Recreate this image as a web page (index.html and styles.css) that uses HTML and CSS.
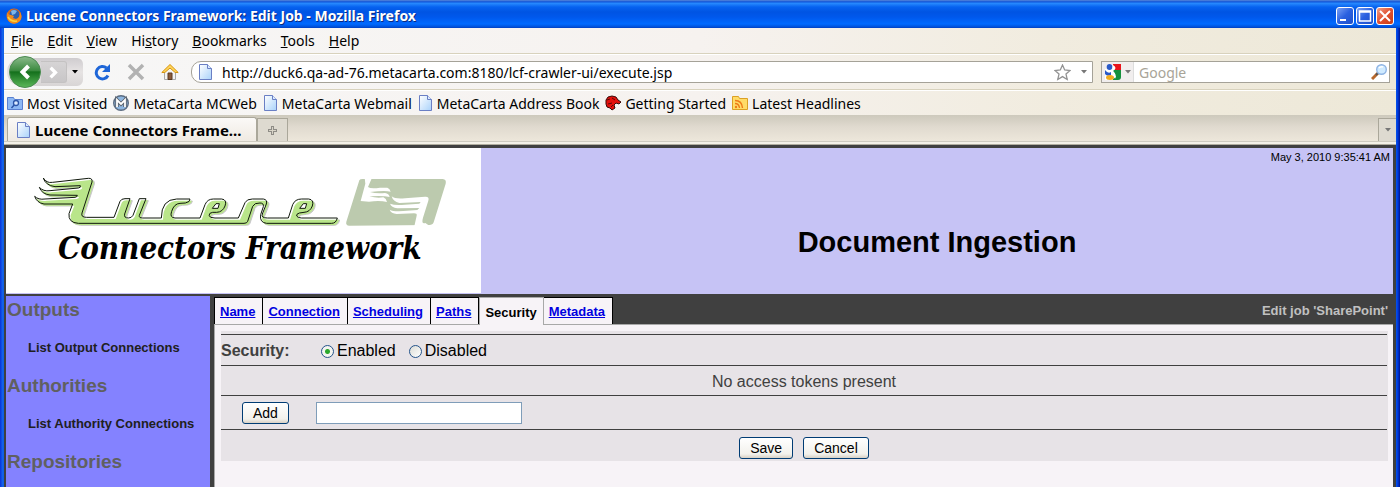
FILE: index.html
```html
<!DOCTYPE html>
<html lang="en">
<head>
<meta charset="utf-8">
<title>Lucene Connectors Framework: Edit Job</title>
<link rel="stylesheet" href="styles.css">
</head>
<body>
<svg class="defs" width="0" height="0" aria-hidden="true">
  <defs>
    <linearGradient id="sheet" x1="0" y1="0" x2="1" y2="1"><stop offset="0" stop-color="#fff"/><stop offset="1" stop-color="#a9d2fa"/></linearGradient>
    <linearGradient id="green" x1="0" y1="0" x2="0" y2="1"><stop offset="0" stop-color="#8cbb8c"/><stop offset=".45" stop-color="#3c8b40"/><stop offset=".5" stop-color="#14701c"/><stop offset="1" stop-color="#5cb85a"/></linearGradient>
    <symbol id="page" viewBox="0 0 13 16"><path d="M.5.5h8l4 4v11H.5z" fill="url(#sheet)" stroke="#6a7fc4"/><path d="M8.500.5v4h4" fill="#dcebff" stroke="#6a7fc4"/></symbol>
    <symbol id="caret" viewBox="0 0 6 4"><path d="M0 0h6L3 3.500z" fill="currentColor"/></symbol>
    <path id="word" d="M70 40Q78 56 98 53L205 41Q218 40 216 52L186 145Q182 158 200 158L282 158 300 110Q304 102 315 102L330 102 314 148Q311 160 325 160 335 160 339 152L358 102 378 102 358 152Q356 160 368 160L424 160Q424 104 470 103L510 103Q511 112 496 115L480 116Q462 117 455 140 448 159 465 160L540 160 555 120Q562 103 580 103L605 103Q622 105 615 124 608 142 590 143L578 143Q567 144 567 153 570 160 585 160L655 160 675 114Q680 103 697 103L730 103Q743 105 739 118L727 148Q723 160 742 160L805 160 818 120Q825 103 845 103L866 103Q883 105 877 124 870 142 852 143L838 145Q828 148 830 154 833 160 845 160L952 160Q948 176 935 176L740 176Q718 174 722 150L730 126Q732 115 720 115 703 114 698 125L683 170Q681 176 672 176L175 176Q144 174 147 147L158 118 72 118Q50 114 44 95 55 106 75 103L165 98Q172 97 172 92L90 91Q65 88 58 68 70 81 90 78L175 70Q183 69 181 63L105 66Q76 62 70 40z"/>
  </defs>
</svg>
<div class="window">
  <header class="titlebar">
    <svg class="icon16" viewBox="0 0 16 16"><circle cx="8" cy="8" r="7.500" fill="#e66a10"/><circle cx="8.500" cy="6.500" r="5" fill="#2a5fae"/><path d="M5 3q3-2 6 0l-2 3-3 1z" fill="#7db6e8"/><path d="M1 4q1 3 4 3l3 1-1 2 3 1q4-1 4-7 3 5 0 9-4 4-9 2Q0 12 1 4z" fill="#f08a1c"/><path d="M2 9q3 5 9 4" fill="none" stroke="#ffd23a" stroke-width="1.500"/></svg>
    <span class="titletext">Lucene Connectors Framework: Edit Job - Mozilla Firefox</span>
    <button class="winbtn" aria-label="Minimize"><svg viewBox="0 0 16 16"><path d="M3 11h6v2H3z" fill="#fff"/></svg></button>
    <button class="winbtn" aria-label="Maximize"><svg viewBox="0 0 16 16"><path d="M2.500 3h11v10h-11zM2 4h12" fill="none" stroke="#fff" stroke-width="1.500"/></svg></button>
    <button class="winbtn close" aria-label="Close"><svg viewBox="0 0 16 16"><path d="M3 3l10 10M13 3L3 13" stroke="#fff" stroke-width="2"/></svg></button>
  </header>

  <nav class="menubar" aria-label="Menu">
    <button><u>F</u>ile</button><button><u>E</u>dit</button><button><u>V</u>iew</button><button>Hi<u>s</u>tory</button><button><u>B</u>ookmarks</button><button><u>T</u>ools</button><button><u>H</u>elp</button>
  </nav>

  <div class="navbar">
    <div class="backforward">
      <button class="back" aria-label="Back"><svg viewBox="0 0 32 32"><circle cx="16" cy="16" r="15.500" fill="url(#green)" stroke="#4a8a50"/><path d="M19.500 10L13.500 16l6 6" fill="none" stroke="#fff" stroke-width="4"/></svg></button>
      <button class="forward" aria-label="Forward"><svg viewBox="0 0 26 22"><path d="M10 6l5 5-5 5" fill="none" stroke="#fff" stroke-width="3.500"/></svg></button>
      <button class="recent" aria-label="Recent pages"><svg class="caret"><use href="#caret"/></svg></button>
    </div>
    <button class="tool" aria-label="Reload"><svg viewBox="0 0 18 18"><path d="M13.500 5A6.200 6.200 0 1 0 15 12.500" fill="none" stroke="#1e66d8" stroke-width="3"/><path d="M17 1v8H9z" fill="#1e66d8"/></svg></button>
    <button class="tool" aria-label="Stop"><svg viewBox="0 0 18 18"><path d="M2 2l14 14M16 2L2 16" stroke="#b2b2b2" stroke-width="3.500"/></svg></button>
    <button class="tool" aria-label="Home"><svg viewBox="0 0 18 18"><path d="M3.500 8v8.500h11V8L9 3z" fill="#f3f3f3" stroke="#a8a8a8"/><path d="M7 10h4v6.500H7z" fill="#8a5a3a" stroke="#5a3a22"/><path d="M9 1.500L.8 9.500h3L9 5l5.200 4.500h3z" fill="#ffd65c" stroke="#d6930f"/></svg></button>
    <div class="urlbox">
      <svg class="pageicon"><use href="#page"/></svg>
      <input class="url" type="text" aria-label="Address" value="http://duck6.qa-ad-76.metacarta.com:8180/lcf-crawler-ui/execute.jsp">
      <svg class="star" viewBox="0 0 17 17"><path d="M8.500 1l2.200 5 5.300.5-4 3.600 1.200 5.400-4.700-2.900-4.700 2.900L5 10.100 1 6.500 6.300 6z" fill="#fff" stroke="#929292" stroke-width="1.300"/></svg>
      <svg class="caret dim"><use href="#caret"/></svg>
    </div>
    <div class="searchbox">
      <div class="engine">
        <svg class="icon16" viewBox="0 0 16 16"><path d="M8 0h8v6H8z" fill="#e8141c"/><path d="M8 6h8v7q0 3-3 3H8z" fill="#14903c"/><path d="M0 5h7l4 8-5 3H0z" fill="#fff"/><ellipse cx="4.500" cy="3" rx="2.800" ry="3" fill="#2a5ac8"/><path d="M0 6q3 4 6 2v3q-4 2-6-1z" fill="#2a5ac8"/><ellipse cx="5" cy="13.500" rx="4" ry="2.500" fill="#f2ac1e"/><path d="M8 1q5 3 0 6 4 3 2 8-1-5-3-7z" fill="#fff"/></svg>
        <svg class="caret dim"><use href="#caret"/></svg>
      </div>
      <input class="search" type="text" aria-label="Search" placeholder="Google">
      <svg class="icon16" viewBox="0 0 16 16"><path d="M1 15l6-6" stroke="#b8682c" stroke-width="3"/><path d="M5 11l2-2" stroke="#555" stroke-width="2"/><circle cx="10.500" cy="5.500" r="4.800" fill="#cfeaff" stroke="#8fb4e4" stroke-width="1.400"/><path d="M8 4q2-2 4-1" stroke="#fff" stroke-width="1.500" fill="none"/></svg>
    </div>
  </div>

  <nav class="bookmarks" aria-label="Bookmarks">
    <a href="#"><svg class="icon16" viewBox="0 0 16 16"><path d="M.5 2.500h6l1 2h8v10H.5z" fill="#8db8f4" stroke="#5a80d0"/><circle cx="9" cy="8" r="2.500" fill="#dcebff" stroke="#2c55a8" stroke-width="1.300"/><path d="M7.200 10L4.500 13" stroke="#2c55a8" stroke-width="1.500"/></svg>Most Visited</a>
    <a href="#"><svg class="icon16" viewBox="0 0 16 16"><circle cx="8" cy="8" r="7.300" fill="#8eb6e0" stroke="#5c6c80" stroke-width="1.400"/><path d="M4 12V5l4 4 4-4v7" fill="none" stroke="#59606a" stroke-width="3.500"/><path d="M4 12V5l4 4 4-4v7" fill="none" stroke="#fff" stroke-width="1.800"/></svg>MetaCarta MCWeb</a>
    <a href="#"><svg class="pageicon"><use href="#page"/></svg>MetaCarta Webmail</a>
    <a href="#"><svg class="pageicon"><use href="#page"/></svg>MetaCarta Address Book</a>
    <a href="#"><svg class="icon16" viewBox="0 0 16 16"><path d="M1 5l2-3 4-1 4 1 2 3 3 2-2 2-3-1-2 2 1 3-3 2-2-2-3-1-1-3z" fill="#e4100c" stroke="#3a0806"/><path d="M2 5l3-1M3 9l4-1M7 3l3 2M6 12l2-2" stroke="#5a0806"/></svg>Getting Started</a>
    <a href="#"><svg class="icon16" viewBox="0 0 16 16"><path d="M.5 1.500h6l1 2h8v11H.5z" fill="#ffdc68" stroke="#dca024"/><circle cx="4" cy="12" r="1.200" fill="#ee7a18"/><path d="M3 8.500q4 0 4.500 4.500M3 5.500q7 0 7.500 7.500" fill="none" stroke="#ee7a18" stroke-width="1.400"/></svg>Latest Headlines</a>
  </nav>

  <div class="tabstrip">
    <button class="tab"><svg class="pageicon"><use href="#page"/></svg>Lucene Connectors Frame...</button>
    <button class="newtab" aria-label="New tab"><svg viewBox="0 0 9 9"><path d="M4.500 0v9M0 4.500h9" stroke="#8e8c86" stroke-width="3"/><path d="M4.500 1v7M1 4.500h7" stroke="#d8d4c8"/></svg></button>
    <button class="alltabs" aria-label="All tabs"><svg class="caret dim"><use href="#caret"/></svg></button>
  </div>

  <div class="site">
    <div class="banner">
      <div class="logo">
        <svg class="mark" viewBox="30 25 1260 165" role="img" aria-label="Lucene">
          <g stroke-linejoin="round">
            <use class="shade" href="#word" transform="translate(7 6)"/>
            <use class="blank" href="#word"/>
            <use class="leaf" href="#word" transform="translate(5 5)"/>
            <use class="ink" href="#word"/>
            <path class="ink hole" d="M588 117h10l-4 14h-17zM850 117h10l-4 14h-17z"/>
          </g>
          <g transform="translate(960 15)">
            <path d="M58 32Q60 28 68 28L308 28Q320 29 317 42L281 158Q278 166 268 166L28 168Q16 167 19 156z" fill="#bccaae"/>
            <g fill="#fff">
              <path d="M74 24L96 24 84 52Q92 58 120 54L142 54Q150 57 152 66 135 62 90 67 110 73 135 70 147 72 149 82 130 77 88 80 110 86 130 83 139 87 141 97 120 92 87 96L62 94 76 42z"/>
              <path d="M155 80Q165 89 195 86L255 81Q269 80 265 93L249 144Q243 164 256 160L268 168 222 174 230 138Q232 131 222 131L170 133Q153 131 149 120 160 126 190 124L232 121 238 115 172 116Q154 113 150 102 165 108 195 105L238 102 242 97 178 100Q159 96 155 80z"/>
            </g>
          </g>
        </svg>
        <div class="logotext">Connectors Framework</div>
      </div>
      <div class="heading">
        <div class="date">May 3, 2010 9:35:41 AM</div>
        <h1>Document Ingestion</h1>
      </div>
    </div>

    <div class="columns">
      <nav class="sidebar" aria-label="Sections">
        <h2>Outputs</h2><a href="#">List Output Connections</a>
        <h2>Authorities</h2><a href="#">List Authority Connections</a>
        <h2>Repositories</h2>
      </nav>
      <main class="content">
        <div class="jobtabs">
          <a href="#">Name</a><a href="#">Connection</a><a href="#">Scheduling</a><a href="#">Paths</a><span class="current">Security</span><a href="#">Metadata</a>
          <span class="jobname">Edit job 'SharePoint'</span>
        </div>
        <form class="panel">
          <div class="rows">
            <div class="row">
              <span class="label">Security:</span>
              <div class="choices">
                <label><input type="radio" name="security" checked>Enabled</label>
                <label><input type="radio" name="security">Disabled</label>
              </div>
            </div>
            <div class="row message">No access tokens present</div>
            <div class="row tall">
              <button class="btn add" type="button">Add</button>
              <input class="token" type="text" aria-label="Access token">
            </div>
            <div class="row actions"><button class="btn" type="button">Save</button><button class="btn" type="button">Cancel</button></div>
          </div>
        </form>
      </main>
    </div>
  </div>
</div>
</body>
</html>
```
FILE: styles.css
```css
* { box-sizing: border-box; }
body { margin: 0; background: #0a4ae0; font-family: "Liberation Sans", Arial, sans-serif; }
button { font: inherit; color: inherit; padding: 0; border: 0; background: none; }
a { color: inherit; text-decoration: none; }
svg { display: block; flex: none; }
.defs { position: absolute; }
.icon16 { width: 16px; height: 16px; }
.pageicon { width: 13px; height: 16px; }
.caret { width: 6px; height: 4px; color: #000; }
.caret.dim { color: #777; }

.window {
  height: 100vh; display: flex; flex-direction: column; overflow: hidden;
  padding: 0 4px;
  background: linear-gradient(90deg, #0831d9, #166aee 3px, #0855dd 4px, #0855dd calc(100% - 4px), #0045f0 calc(100% - 3px), #00138c);
}
.titlebar {
  flex: none; height: 28px; display: flex; align-items: center; gap: 2px;
  margin: 0 -4px; padding: 4px 6px 0; color: #fff;
  background: linear-gradient(#5a87d8, #0a50d8 2px, #2a8cff 3px, #0662f0 7px, #0054e3 12px, #0058ec 17px, #006aff 24px, #0050d8 27px, #003dc0);
}
.titletext { flex: 1; margin-left: 2px; font: bold 14px/20px "Noto Sans", sans-serif; text-shadow: 1px 1px #0a2a80; }
.winbtn { width: 18px; height: 18px; border: 1px solid #fff; border-radius: 3px; background: linear-gradient(135deg, #7aa0f4, #2a60e0 50%, #2050c8); }
.winbtn.close { background: linear-gradient(135deg, #f0a088, #e05030 50%, #c83c14); }

.menubar, .navbar, .bookmarks, .tabstrip { flex: none; font-family: "Noto Sans", sans-serif; font-size: 14px; }
.menubar, .navbar, .bookmarks { display: flex; align-items: center; background: linear-gradient(90deg, #f7f7f7, #f6f2ef 50%, #f1ecdf 75%, #ede8d8); }
.menubar { height: 26px; gap: 14px; padding: 0 7px; border-bottom: 1px solid #d8d2bd; }
.navbar { height: 36px; padding: 0 3px; border-top: 1px solid #fff; border-bottom: 1px solid #d8d2bd; }
.backforward { display: flex; align-items: center; height: 28px; margin-right: 10px; border-radius: 14px 6px 6px 14px; background: linear-gradient(#cfcccf, #e6e3e3 50%, #d8d5d5); }
.back { width: 32px; height: 32px; margin: 0 0 0 2px; }
.forward { width: 26px; height: 22px; border: 1px solid #c4c2c2; border-left: 0; border-radius: 0 3px 3px 0; background: linear-gradient(#d6d4d5, #c8c6c7); }
.recent { width: 16px; height: 22px; padding-left: 5px; }
.tool { width: 18px; margin-right: 16px; }
.tool svg { width: 18px; height: 18px; }
.urlbox, .searchbox { display: flex; align-items: center; height: 22px; border: 1px solid #a5a298; background: #fff; }
.urlbox { flex: 1; min-width: 0; margin: 0 8px 0 -4px; padding: 0 5px 0 7px; border-radius: 10px 0 0 10px; }
.url, .search { flex: 1; min-width: 0; border: 0; outline: 0; padding: 0; background: none; font: inherit; color: #000; }
.url { margin-left: 10px; }
.star { width: 17px; height: 17px; margin-right: 10px; }
.searchbox { width: 289px; margin-right: 3px; padding-right: 2px; }
.engine { display: flex; align-items: center; gap: 4px; width: 32px; height: 20px; padding-left: 3px; border-right: 1px solid #ddd; background: #f1eeee; }
.search { margin-left: 5px; }
.search::placeholder { color: #a8a498; opacity: 1; }
.bookmarks { height: 25px; gap: 6px; padding: 0 3px; border-top: 1px solid #fff; white-space: nowrap; }
.bookmarks a { display: flex; align-items: center; gap: 4px; }
.bookmarks .pageicon { width: 15px; }
.tabstrip { display: flex; align-items: flex-end; height: 30px; padding: 0 0 3px 3px; border-bottom: 1px solid #b0ad9f; background: linear-gradient(#cdc9bc, #e0dacf 12px, #ece6da 25px, #ece6da 26px, #a8a597 26px, #f4f1e8 27px); }
.tab { display: flex; align-items: center; gap: 5px; height: 24px; width: 250px; padding-left: 9px; border: 1px solid #aaa79a; border-bottom: 0; border-radius: 3px 3px 0 0; background: linear-gradient(#fbf9f7, #efeae2); font-weight: bold; font-size: 15px; white-space: nowrap; overflow: hidden; }
.newtab { width: 31px; height: 23px; border: 1px solid #aaa79a; border-bottom: 0; background: #dedad0; }
.newtab svg { width: 9px; height: 9px; margin: auto; }
.alltabs { width: 18px; height: 23px; margin-left: auto; border: 1px solid #aaa79a; border-bottom: 0; border-right: 0; background: #dedad0; }
.alltabs .caret { margin: auto; }

.site { flex: 1; min-height: 0; display: flex; flex-direction: column; padding: 3px 3px 0 2px; background: #404040; }
.banner { flex: none; display: flex; height: 146px; background: #c6c3f5; }
.logo { width: 475px; height: 145px; padding: 25px 0 0 24px; background: #fff; }
.mark { width: 420px; height: 55px; }
.shade { fill: #c8c8c8; stroke: #c8c8c8; stroke-width: 3; }
.blank { fill: #fff; }
.leaf { fill: #b9e58a; }
.ink { fill: none; stroke: #10180c; stroke-width: 3; }
.hole { fill: #fff; }
.logotext { margin: 1px 0 0 28px; font: italic bold 31px/38px "DejaVu Serif Condensed", "DejaVu Serif", serif; font-stretch: condensed; color: #000; white-space: nowrap; }
.heading { flex: 1; }
.date { padding-right: 3px; text-align: right; font-size: 11px; line-height: 19px; }
h1 { margin: 58px 0 0; font-size: 29px; line-height: 34px; text-align: center; }
.columns { flex: 1; min-height: 0; display: flex; gap: 4px; padding-top: 2px; }
.sidebar { width: 204px; padding-top: 1px; background: #8482ff; color: #202020; }
.sidebar h2 { margin: 0; padding-left: 1px; font-size: 19px; line-height: 26px; color: #606060; }
.sidebar a { display: block; padding-left: 22px; font-size: 13px; font-weight: bold; line-height: 50px; white-space: nowrap; }
.content { flex: 1; min-width: 0; display: flex; flex-direction: column; }
.jobtabs { flex: none; display: flex; height: 29px; padding-top: 1px; font-size: 13px; font-weight: bold; line-height: 27px; border-bottom: 1px solid #a8a8a8; }
.jobtabs a { padding: 0 7px 0 5px; border: solid #000; border-width: 1px 1px 0 0; background: #f7f3f7; color: #0000e0; text-decoration: underline; }
.jobtabs a:first-child { border-left-width: 1px; }
.jobtabs .current { height: 29px; padding: 1px 6px 0 5px; border: 1px solid #a8a8a8; border-bottom: 0; background: #f7f3f7; }
.jobname { margin-left: auto; padding-right: 5px; color: #c0c0c0; }
.panel { flex: 1; padding: 6px 5px 0 6px; border-left: 1px solid #a8a8a8; background: #f7f3f7; }
.rows { padding: 3px 1px 0 0; background: #e7e3e7; color: #404040; }
.row { display: flex; align-items: center; gap: 5px; height: 31px; border-top: 1px solid #404040; }
.row.message { height: 30px; padding-top: 2px; justify-content: center; font-size: 16px; }
.row.tall { height: 34px; }
.row.actions { height: 32px; justify-content: center; gap: 10px; padding-top: 4px; }
.label { width: 90px; padding-top: 2px; font-size: 16px; font-weight: bold; }
.choices { display: flex; gap: 13px; padding: 2px 0 0 5px; font-size: 16px; color: #000; }
.choices label { display: flex; align-items: center; gap: 3px; }
.choices input { appearance: none; width: 13px; height: 13px; margin: 0; border: 1px solid #24538a; border-radius: 50%; background: linear-gradient(135deg, #dcdcd6, #fff); }
.choices input:checked { background: radial-gradient(circle, #2ca82c 2px, #f4f4f0 3px); }
.btn { height: 22px; padding: 0 10px; border: 1px solid #003c74; border-radius: 3px; background: linear-gradient(#fff, #f2f1ec 80%, #d8d0c4); font-size: 14px; color: #000; }
.btn.add { margin: 0 22px 0 21px; }
.token { width: 206px; height: 22px; padding: 0 3px; border: 1px solid #7f9db9; background: #fff; font: inherit; }
```
